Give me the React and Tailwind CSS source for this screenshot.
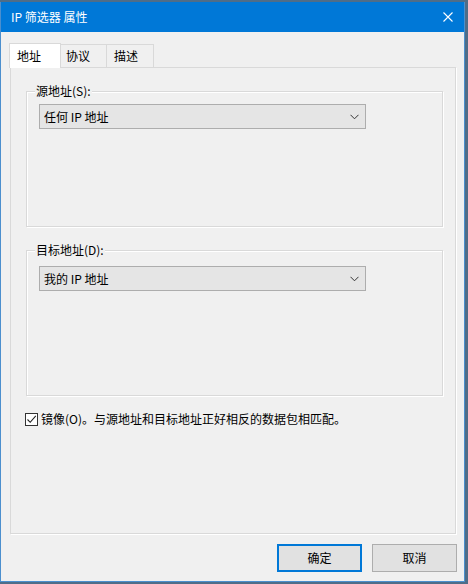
import React from "react";

const font = { fontFamily: '"Segoe UI", "Noto Sans CJK SC", "Noto Sans", sans-serif' };

function Chevron() {
  return (
    <svg width="9" height="6" viewBox="0 0 9 6" className="block">
      <path d="M0.5 0.8 L4.5 4.8 L8.5 0.8" fill="none" stroke="#333" strokeWidth="1" />
    </svg>
  );
}

function Combo({ text }) {
  return (
    <div className="ml-[12px] flex h-[25px] w-[327px] items-center justify-between border border-[#adadad] bg-[#e5e5e5] pl-[4px] pr-[6px]">
      <span className="text-[12px] leading-[14px] text-black">{text}</span>
      <Chevron />
    </div>
  );
}

function Group({ label, value, height, padTop }) {
  return (
    <div
      className="relative ml-[15px] w-[417px] border border-[#d9d9d9] shadow-[inset_1px_1px_0_#ffffff,1px_1px_0_#ffffff]"
      style={{ height }}
    >
      <div className="absolute left-[8px] top-[-8px] bg-[#f0f0f0] px-[1px] text-[12px] leading-[14px] text-black">
        {label}
      </div>
      <div style={{ paddingTop: padTop }}>
        <Combo text={value} />
      </div>
    </div>
  );
}

export default function App() {
  return (
    <div className="h-[584px] w-[468px] overflow-hidden bg-[#4f6d88]" style={font}>
      <div className="mt-[2px] flex h-[580px] w-[465px] flex-col border-x border-b border-[#4b8fce] bg-[#f0f0f0]">
        {/* Title bar */}
        <div className="flex h-[30px] items-center justify-between bg-[#0078d7] pl-[10px] pr-[11px] text-white">
          <span className="text-[12px] leading-[14px]">IP 筛选器 属性</span>
          <svg width="10" height="10" viewBox="0 0 10 10" className="block">
            <path d="M0.5 0.5 L9.5 9.5 M9.5 0.5 L0.5 9.5" stroke="#fff" strokeWidth="1.1" />
          </svg>
        </div>

        {/* Tabs */}
        <div className="mt-[11px] flex items-end pl-[8px]">
          <div className="relative z-10 mb-[-1px] flex h-[25px] w-[52px] items-center border-x border-t border-[#d9d9d9] bg-white pl-[7px] text-[12px] leading-[14px] text-black">
            地址
          </div>
          <div className="flex h-[23px] w-[46px] items-center border-t border-r border-[#d9d9d9] bg-[#f0f0f0] pl-[5px] text-[12px] leading-[14px] text-black">
            协议
          </div>
          <div className="flex h-[23px] w-[47px] items-center border-t border-r border-[#d9d9d9] bg-[#f0f0f0] pl-[7px] text-[12px] leading-[14px] text-black">
            描述
          </div>
        </div>

        {/* Panel */}
        <div className="ml-[9px] flex h-[467px] w-[446px] flex-col border border-[#d9d9d9] bg-[#f0f0f0] shadow-[1px_1px_0_#ffffff]">
          <div className="mt-[23px]">
            <Group label="源地址(S):" value="任何 IP 地址" height={136} padTop={12} />
          </div>
          <div className="mt-[23px]">
            <Group label="目标地址(D):" value="我的 IP 地址" height={146} padTop={15} />
          </div>
          <div className="ml-[14px] mt-[16px] flex items-center">
            <div className="flex h-[13px] w-[13px] items-center justify-center border border-[#333] bg-white">
              <svg width="11" height="11" viewBox="0 0 11 11" className="block">
                <path d="M1.5 5.5 L4.2 8.3 L9.8 1.8" fill="none" stroke="#222" strokeWidth="1.1" />
              </svg>
            </div>
            <span className="ml-[3px] text-[12px] leading-[14px] text-black">
              镜像(O)。与源地址和目标地址正好相反的数据包相匹配。
            </span>
          </div>
        </div>

        {/* Buttons */}
        <div className="mt-[10px] flex justify-end gap-[10px] pr-[7px]">
          <div className="flex h-[28px] w-[85px] items-center justify-center border-2 border-[#0078d7] bg-[#e1e1e1] text-[12px] leading-[14px] text-black">
            确定
          </div>
          <div className="flex h-[28px] w-[85px] items-center justify-center border border-[#adadad] bg-[#e1e1e1] text-[12px] leading-[14px] text-black">
            取消
          </div>
        </div>
      </div>
    </div>
  );
}
